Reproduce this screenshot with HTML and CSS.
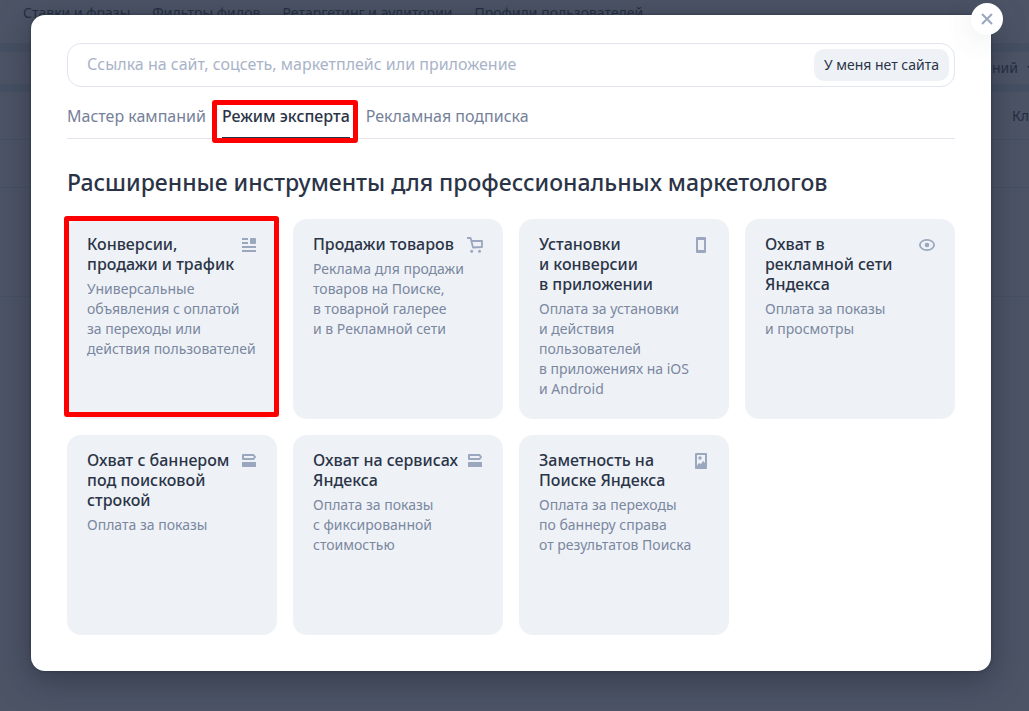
FILE: index.html
```html
<!DOCTYPE html>
<html lang="ru">
<head>
<meta charset="utf-8">
<meta name="viewport" content="width=device-width, initial-scale=1">
<title>Режим эксперта</title>
<link rel="stylesheet" href="styles.css">
</head>
<body>
<div class="page">
  <nav class="page-nav">
    <a href="#">Ставки и фразы</a>
    <a href="#">Фильтры фидов</a>
    <a href="#">Ретаргетинг и аудитории</a>
    <a href="#">Профили пользователей</a>
  </nav>
  <div class="page-filter"><span>Кампаний</span><svg width="8" height="5" viewBox="0 0 8 5"><path d="M0 0h8L4 5z" fill="currentColor"/></svg></div>
  <div class="page-head">Кл</div>
  <div class="page-row"></div>
  <div class="page-row page-row-tall"></div>
</div>

<main class="modal" role="dialog" aria-labelledby="modal-title">
  <button class="close" type="button" aria-label="Закрыть">
    <svg width="12" height="12" viewBox="0 0 12 12"><path d="M1 1l10 10M11 1L1 11" stroke="currentColor" stroke-width="2" fill="none"/></svg>
  </button>

  <form class="search">
    <input class="search-input" type="text" aria-label="Ссылка" placeholder="Ссылка на сайт, соцсеть, маркетплейс или приложение">
    <button class="search-button" type="button">У меня нет сайта</button>
  </form>

  <div class="tabs" role="tablist">
    <button class="tab" type="button" role="tab">Мастер кампаний</button>
    <button class="tab tab-active" type="button" role="tab" aria-selected="true">Режим эксперта</button>
    <button class="tab" type="button" role="tab">Рекламная подписка</button>
  </div>

  <h1 class="title" id="modal-title">Расширенные инструменты для профессиональных маркетологов</h1>

  <div class="cards">
    <button class="card card-marked" type="button">
      <span class="card-title">Конверсии,<br>продажи и трафик</span>
      <svg class="card-icon" viewBox="0 0 16 16"><path d="M1 1h6v2H1zM1 5h6v2H1zM1 9h14v2H1zM1 13h14v2H1z"/><rect x="9" y="1" width="6" height="6" rx="1"/></svg>
      <span class="card-text">Универсальные<br>объявления с оплатой<br>за переходы или<br>действия пользователей</span>
    </button>
    <button class="card" type="button">
      <span class="card-title">Продажи товаров</span>
      <svg class="card-icon" viewBox="0 0 16 16"><path d="M0 1h3.600L6 10.500l9-.5V4H4.500" fill="none" stroke="currentColor" stroke-width="1.800" stroke-linejoin="round"/><circle cx="4.700" cy="14.300" r="1.500"/><circle cx="12.500" cy="14.300" r="1.500"/></svg>
      <span class="card-text">Реклама для продажи<br>товаров на Поиске,<br>в товарной галерее<br>и в Рекламной сети</span>
    </button>
    <button class="card" type="button">
      <span class="card-title">Установки<br>и конверсии<br>в приложении</span>
      <svg class="card-icon" viewBox="0 0 16 16"><path fill-rule="evenodd" d="M4 0h8a1 1 0 0 1 1 1v14a1 1 0 0 1-1 1H4a1 1 0 0 1-1-1V1a1 1 0 0 1 1-1zM5 3v10h6V3z"/></svg>
      <span class="card-text">Оплата за установки<br>и действия<br>пользователей<br>в приложениях на iOS<br>и Android</span>
    </button>
    <button class="card" type="button">
      <span class="card-title">Охват в<br>рекламной сети<br>Яндекса</span>
      <svg class="card-icon" viewBox="0 0 16 16"><ellipse cx="8" cy="8" rx="7.100" ry="5.100" fill="none" stroke="currentColor" stroke-width="1.800"/><circle cx="8" cy="8" r="2.300"/></svg>
      <span class="card-text">Оплата за показы<br>и просмотры</span>
    </button>
    <button class="card" type="button">
      <span class="card-title">Охват с баннером<br>под поисковой<br>строкой</span>
      <svg class="card-icon" viewBox="0 0 16 16"><path d="M2 2h10.500L14 4l-1.500 2H2z" fill="none" stroke="currentColor" stroke-width="2" stroke-linejoin="round"/><path d="M1 9h14v5H1z"/></svg>
      <span class="card-text">Оплата за показы</span>
    </button>
    <button class="card" type="button">
      <span class="card-title">Охват на сервисах<br>Яндекса</span>
      <svg class="card-icon" viewBox="0 0 16 16"><path d="M2 2h10.500L14 4l-1.500 2H2z" fill="none" stroke="currentColor" stroke-width="2" stroke-linejoin="round"/><path d="M1 9h14v5H1z"/></svg>
      <span class="card-text">Оплата за показы<br>с фиксированной<br>стоимостью</span>
    </button>
    <button class="card" type="button">
      <span class="card-title">Заметность на<br>Поиске Яндекса</span>
      <svg class="card-icon" viewBox="0 0 16 16"><path fill-rule="evenodd" d="M3 0h10a1 1 0 0 1 1 1v14a1 1 0 0 1-1 1H3a1 1 0 0 1-1-1V1a1 1 0 0 1 1-1zM4 2v10.500L6 10l2 1 2-3 2 2V2z"/><circle cx="7" cy="5" r="1.700"/></svg>
      <span class="card-text">Оплата за переходы<br>по баннеру справа<br>от результатов Поиска</span>
    </button>
  </div>
</main>
</body>
</html>
```
FILE: styles.css
```css
* {
  box-sizing: border-box;
}

body {
  margin: 0;
  min-height: 100vh;
  display: flex;
  font-family: "Noto Sans", "Open Sans", sans-serif;
  color: #2b3447;
  background: #4c5466;
}

button {
  font: inherit;
  color: inherit;
  border: 0;
  padding: 0;
  background: none;
  cursor: pointer;
}

.page {
  position: absolute;
  inset: 0;
  overflow: hidden;
  font-size: 14px;
  line-height: 20px;
  color: #262f42;
}

.page-nav {
  display: flex;
  gap: 22px;
  height: 43px;
  padding: 3px 23px;
}

.page-nav a {
  color: inherit;
  text-decoration: none;
  white-space: nowrap;
}

.page-filter {
  display: flex;
  align-items: center;
  justify-content: flex-end;
  gap: 9px;
  height: 49px;
  margin-right: -6px;
  border: solid #465063;
  border-width: 9px 0 8px;
}

.page-head {
  display: flex;
  justify-content: flex-end;
  align-items: center;
  height: 48px;
  border-bottom: 1px solid #465063;
}

.page-row {
  height: 48px;
  border-bottom: 1px solid #465063;
}

.page-row-tall {
  height: 109px;
}

.modal {
  position: relative;
  flex: 1;
  align-self: flex-start;
  margin: 15px 38px 40px 31px;
  padding: 28px 36px 36px;
  border-radius: 14px;
  background: #fff;
  box-shadow: 0 8px 32px rgba(25, 34, 48, 0.5), 0 0 3px rgba(25, 30, 48, 0.5);
}

.close {
  position: absolute;
  top: -12px;
  right: -12px;
  display: grid;
  place-items: center;
  width: 32px;
  height: 32px;
  border-radius: 50%;
  color: #9ba7bf;
  background: #fff;
  box-shadow: 0 4px 30px rgba(70, 80, 110, 0.12);
}

.search {
  display: flex;
  align-items: center;
  height: 44px;
  padding: 0 5px 0 19px;
  border: 1px solid #e2e4f0;
  border-radius: 14px;
}

.search-input {
  flex: 1;
  min-width: 0;
  border: 0;
  padding: 0 0 2px;
  outline: 0;
  font: inherit;
  font-size: 16px;
  line-height: 20px;
  background: none;
}

.search-input::placeholder {
  color: #a9b3c8;
  opacity: 1;
}

.search-button {
  height: 32px;
  padding: 0 10px 2px;
  border-radius: 10px;
  font-size: 14px;
  background: #eef2f7;
  white-space: nowrap;
}

.tabs {
  display: flex;
  gap: 16px;
  margin-top: 12px;
  border-bottom: 1px solid #e2e4f0;
}

.tab {
  position: relative;
  height: 39px;
  padding-bottom: 6px;
  font-size: 16px;
  line-height: 20px;
  color: #75819a;
  white-space: nowrap;
}

.tab-active {
  font-weight: 500;
  color: #2b3447;
  box-shadow: inset 0 -1px #2b3447;
}

.tab-active::after,
.card-marked::after {
  content: "";
  position: absolute;
  border: 5px solid #f00;
  border-radius: 3px;
  pointer-events: none;
}

.tab-active::after {
  inset: 1px -8px -5px -10px;
}

.card-marked::after {
  inset: -3px -2px 2px -3px;
}

.title {
  margin: 29px 0 23px;
  font-size: 23px;
  line-height: 28px;
  font-weight: 500;
}

.cards {
  display: grid;
  grid-template-columns: repeat(4, 1fr);
  gap: 16px;
}

.card {
  position: relative;
  display: grid;
  grid-template-columns: 1fr 16px;
  align-content: start;
  row-gap: 5px;
  min-height: 200px;
  padding: 15px 20px;
  border-radius: 14px;
  background: #eef2f7;
  text-align: left;
  line-height: 20px;
  white-space: nowrap;
}

.card-title {
  min-width: 0;
  font-size: 16px;
  font-weight: 500;
}

.card-icon {
  width: 16px;
  height: 16px;
  margin-top: 3px;
  color: #9ba7bf;
  fill: currentColor;
}

.card-text {
  grid-column: 1 / -1;
  font-size: 14px;
  color: #7b879f;
}
```
